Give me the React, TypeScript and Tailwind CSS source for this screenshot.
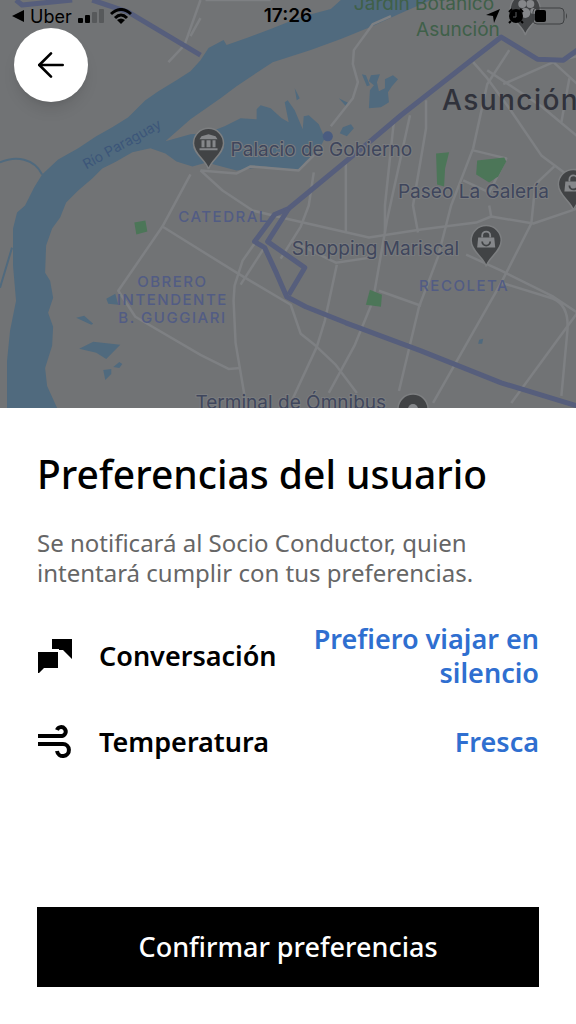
import { ArrowLeft } from 'lucide-react';
import type { ReactNode } from 'react';

const roads = [
  'M200 0 L184 45 L168 62',
  'M270 0 L205 0 M200 18 L190 36',
  'M390 16 L372 24 L353 50 L352 64 L357 82 L352 98 L330 126',
  'M322 146 L298 170 L250 166 L236 173 L200 170',
  'M190 174 L162 226 L118 290 L135 316 L200 354 L228 368 L240 367',
  'M200 170 L222 190 L252 210 L285 218 L368 237 L420 229 L475 222 L490 216 L532 223 L576 208',
  'M162 226 L236 272 L290 304 L300 333 L315 345 L335 364 L356 392',
  'M256 240 L242 260 L234 285 L233 300 L235 342 L246 407',
  'M265 245 L240 284',
  'M313 172 L308 205 L300 226 L280 258',
  'M345 160 L345 232',
  'M409 115 L386 220 L372 300 L354 344 L328 392',
  'M393 120 L384 205 L384 232',
  'M290 240 L335 262 L376 256',
  'M336 264 L324 320 L316 346 L290 402',
  'M425 100 L425 128 L412 205 L417 232',
  'M508 50 L486 84 L472 148 L450 205 L437 256 L418 306 L398 390',
  'M472 62 L486 78 L508 108 L540 155 L576 182',
  'M486 70 L540 106 L576 136',
  'M502 84 L552 62 L576 56 M552 62 L576 84',
  'M472 150 L505 158 L488 192 L462 180',
  'M553 166 L534 184 L530 223 L500 282 L432 402',
  'M568 78 L560 122',
  'M465 254 L500 270 L552 296 L576 312 M500 282 L552 298 Q568 305 566 330 L560 395',
  'M576 312 L510 402',
  'M378 290 L420 305',
  'M488 205 L490 216',
];

const highways = [
  'M16 0 L22 5 L72 0 M92 0 L128 12 L200 55',
  'M576 50 L562 60 L536 59 L500 37 L470 60 L400 115 L368 142 L288 208 L274 214 L254 241 L264 247 L276 273 L286 296 L305 306 L345 322 L420 350 L500 382 L576 405',
  'M288 208 L267 241 L304 267 L288 294',
];

type MapPinProps = {
  x: number;
  y: number;
  children?: ReactNode;
};

// x / y is the centre of the pin's round head
function MapPin({ x, y, children }: MapPinProps) {
  return (
    <g transform={`translate(${x} ${y})`}>
      <path
        d="M0 26 C-2 17 -15 11 -15 0 A15 15 0 1 1 15 0 C15 11 2 17 0 26 Z"
        fill="#414345"
        stroke="#7d7f81"
        strokeWidth="1.5"
      />
      {children}
    </g>
  );
}

function ShoppingBag() {
  return (
    <g>
      <path d="M-8 -3 H8 L9 7 H-9 Z" fill="#85878a" />
      <path d="M-4 -3 V-5 A4 4 0 0 1 4 -5 V-3" fill="none" stroke="#85878a" strokeWidth="1.8" />
      <path d="M-4 1 A4 4 0 0 0 4 1" fill="none" stroke="#414345" strokeWidth="1.8" />
    </g>
  );
}

function CityMap() {
  return (
    <svg
      viewBox="0 0 576 407"
      preserveAspectRatio="xMinYMin slice"
      className="absolute inset-0 size-full font-['Inter',sans-serif]"
      role="img"
      aria-label="Mapa de Asunción"
    >
      <rect width="576" height="407" fill="#717375" />

      <g fill="#506a7e">
        <path d="M340 0 L330 9 L300 17 L270 29 L246 38 L226 45 L223 40 L208 48 L200 60 L190 71 L176 80 L158 91 L145 100 L128 117 L112 127 L96 136 L78 148 L58 159 L42 174 L34 187 L25 205 L17 212 L13 228 L13 265 L16 300 L10 330 L7 360 L7 407 L57 407 L47 385 L45 367 L52 345 L53 326 L48 312 L53 297 L50 280 L45 272 L46 245 L52 228 L60 217 L66 202 L78 190 L92 178 L102 168 L116 161 L132 152 L150 148 L165 153 L176 161 L192 166 L206 162 L236 170 L264 166 L297 170 L305 161 L318 150 L324 138 L318 124 L308 115 L303 116 L302 129 L294 110 L287 100 L284 102 L288 122 L281 118 L270 108 L260 105 L256 109 L256 119 L240 118 L224 126 L206 133 L190 134 L165 141 L190 119 L220 98 L236 86 L272 62 L310 50 L340 39 L372 26 L398 14 L430 0 Z" />
        <path d="M361 74 L365 75 L369 85 L366 86 Z M338 98 L348 103 L346 107 Z M294 88 L299 98 L296 100 Z M342 127 L350 124 L353 128 L346 136 L339 133 Z" />
        <path d="M370 75 L379 74 L376 82 L378 91 L384 88 L384 79 L392 75 L397 79 L391 86 L387 92 L388 102 L380 107 L368 108 L369 90 L373 85 L368 81 Z" />
        <path d="M106 298 L115 293 L118 304 L108 303 Z M76 317 L84 315 L93 323 L91 324 Z M79 348 L93 341 L120 344 L106 358 L96 352 Z M103 369 L111 368 L111 373 L105 379 Z M113 366 L119 361 L122 363 L119 367 Z M478 339 L482 338 L481 343 L477 343 Z" />
      </g>
      <path
        d="M0 162 C16 155 34 158 42 174 M12 247 L0 287"
        fill="none"
        stroke="#506a7e"
        strokeWidth="2"
      />

      <g fill="none" stroke="#7e8083" strokeWidth="2.5" strokeLinejoin="round">
        {roads.map((d) => (
          <path key={d} d={d} />
        ))}
      </g>

      <g fill="#4c7658">
        <path d="M134 222 L145 220 L147 231 L136 234 Z" />
        <path d="M435 153 L448 152 L444 168 L443 186 L436 184 Z" />
        <path d="M476 160 L503 157 L505 161 L497 176 L488 182 L475 174 Z" />
        <path d="M369 289 L381 294 L380 306 L365 304 Z" />
      </g>

      <g fill="none" stroke="#565e7c" strokeWidth="5" strokeLinejoin="round">
        {highways.map((d) => (
          <path key={d} d={d} />
        ))}
      </g>
      <circle cx="327" cy="136" r="5" fill="#4a5c80" />

      <MapPin x={208} y={143}>
        <path d="M-9 -4 L-7 -7 L0 -9 L7 -7 L9 -4 Z M-7 -3 H-4 V4 H-7 Z M-2 -3 H2 V4 H-2 Z M4 -3 H7 V4 H4 Z M-9 5 H9 V7 H-9 Z" fill="#85878a" />
      </MapPin>
      <MapPin x={485} y={240}>
        <ShoppingBag />
      </MapPin>
      <MapPin x={572} y={184}>
        <ShoppingBag />
      </MapPin>
      <MapPin x={412} y={408}>
        <circle r="5" fill="#85878a" />
      </MapPin>
      <MapPin x={524} y={9}>
        <g fill="#85878a">
          <circle cx="-3" cy="-5" r="4" />
          <circle cx="5" cy="-5" r="4" />
          <circle cx="0" cy="4" r="5" />
          <circle cx="8" cy="2" r="3" />
        </g>
      </MapPin>

      <g fill="#3f465c" stroke="#7a7c7f" strokeWidth="2" paintOrder="stroke" className="text-[19px]">
        <text x="230" y="156">Palacio de Gobierno</text>
        <text x="397" y="198">Paseo La Galería</text>
        <text x="291" y="254">Shopping Mariscal</text>
        <text x="195" y="408">Terminal de Ómnibus</text>
      </g>
      <g fill="#3f6049" className="text-[19px]">
        <text x="353" y="10">Jardín Botánico</text>
        <text x="415" y="36">Asunción</text>
      </g>
      <text x="441" y="110" fill="#30323b" className="text-[28px] font-medium tracking-wider">Asunción</text>
      <g fill="#525c84" textAnchor="middle" className="text-[15px] font-medium tracking-widest">
        <text x="223" y="221">CATEDRAL</text>
        <text x="172" y="286">OBRERO</text>
        <text x="172" y="304">INTENDENTE</text>
        <text x="172" y="322">B. GUGGIARI</text>
        <text x="463" y="290">RECOLETA</text>
      </g>
      <text transform="translate(86 169) rotate(-29)" fill="#3c5679" className="text-[14px]">
        Río Paraguay
      </text>
    </svg>
  );
}

function StatusBar() {
  return (
    <div className="relative grid h-8 grid-cols-3 items-center px-3 font-['Inter',sans-serif] text-black">
      <div className="flex items-center gap-1.5">
        <svg viewBox="0 0 12 12" className="size-3" aria-hidden="true">
          <path d="M0 6 L12 0 V12 Z" />
        </svg>
        <span className="text-[18px]">Uber</span>
        <svg viewBox="0 0 26 14" className="h-3.5 w-[26px]" aria-hidden="true">
          <rect x="0" y="9" width="5" height="5" rx="1" />
          <rect x="7" y="6" width="5" height="8" rx="1" />
          <rect x="14" y="3" width="5" height="11" rx="1" fill="#57595b" />
          <rect x="21" y="0" width="5" height="14" rx="1" fill="#57595b" />
        </svg>
        <svg viewBox="0 0 22 16" className="h-4 w-[22px]" aria-hidden="true">
          <g fill="none" stroke="black" strokeWidth="3">
            <path d="M1 6 Q11 -3 21 6" />
            <path d="M5 10 Q11 4 17 10" />
          </g>
          <path d="M7 12 Q11 9 15 12 L11 16 Z" />
        </svg>
      </div>
      <time className="text-center text-[19px] font-semibold">17:26</time>
      <div className="flex items-center justify-end gap-2">
        <svg viewBox="0 0 14 14" className="size-3.5" aria-hidden="true">
          <path d="M14 0 L8 14 L7 7 L0 6 Z" />
        </svg>
        <svg viewBox="0 0 16 16" className="size-4" aria-hidden="true">
          <circle cx="8" cy="8" r="7" />
          <path d="M1 4 L4 1 M12 1 L15 4 M3 13 L1 15 M13 13 L15 15" stroke="black" strokeWidth="2" />
          <path d="M8 4 V9 H5" fill="none" stroke="#5a5c5e" />
        </svg>
        <svg viewBox="0 0 36 18" className="-mr-1 h-[18px] w-9" aria-hidden="true">
          <rect x="1" y="1" width="31" height="16" rx="4" fill="none" stroke="#3f4143" />
          <rect x="3" y="3" width="11" height="12" rx="2" />
          <path d="M34 6 Q36 9 34 12 Z" fill="#3f4143" />
        </svg>
      </div>
    </div>
  );
}

function ChatIcon() {
  return (
    <svg viewBox="0 0 36 36" className="size-9 shrink-0" aria-hidden="true">
      <path d="M15 1 H35 V21 L26 12 H22 V11 H15 Z" />
      <path d="M1 14 H21 V30 H7 L2 35 H1 Z" />
    </svg>
  );
}

function WindIcon() {
  return (
    <svg viewBox="0 0 36 36" className="size-9 shrink-0" fill="none" stroke="black" strokeWidth="4" aria-hidden="true">
      <path d="M1 12 H25 A4.5 4.5 0 1 0 20 6" />
      <path d="M1 20 H26 A6 6 0 1 1 20 27" />
    </svg>
  );
}

type PreferenceRowProps = {
  icon: ReactNode;
  label: string;
  value: string;
};

function PreferenceRow({ icon, label, value }: PreferenceRowProps) {
  return (
    <li className="flex items-center gap-[26px] text-[27px] leading-[34px] font-semibold">
      {icon}
      <span className="text-black">{label}</span>
      <button type="button" className="flex-1 text-right text-[#2f6fd0]">
        {value}
      </button>
    </li>
  );
}

export default function App() {
  return (
    <main className="flex min-h-screen flex-col bg-white font-['Noto_Sans',sans-serif]">
      <header className="relative min-h-48 flex-1 overflow-hidden bg-[#717375]">
        <CityMap />
        <StatusBar />
        <button
          type="button"
          aria-label="Volver"
          className="relative -mt-1 ml-3.5 flex size-[74px] items-center justify-center rounded-full bg-white shadow-lg"
        >
          <ArrowLeft className="size-10" strokeWidth={1.6} />
        </button>
      </header>

      <section className="px-[37px] pt-10 pb-[37px]">
        <h1 className="text-[39px] leading-[52px] font-medium text-black">Preferencias del usuario</h1>
        <p className="mt-7 text-[24px] leading-[30px] text-[#666666]">
          Se notificará al Socio Conductor, quien intentará cumplir con tus preferencias.
        </p>
        <ul className="mt-[34px] flex flex-col gap-[34px]">
          <PreferenceRow icon={<ChatIcon />} label="Conversación" value="Prefiero viajar en silencio" />
          <PreferenceRow icon={<WindIcon />} label="Temperatura" value="Fresca" />
        </ul>
        <button type="button" className="mt-[147px] h-20 w-full bg-black text-[27px] font-medium text-white">
          Confirmar preferencias
        </button>
      </section>
    </main>
  );
}
